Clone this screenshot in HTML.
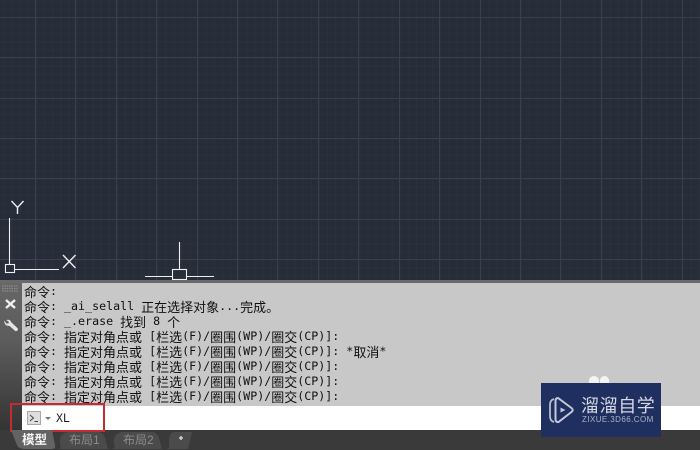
<!DOCTYPE html>
<html lang="zh">
<head>
<meta charset="utf-8">
<style>
html,body{margin:0;padding:0;width:700px;height:450px;overflow:hidden;background:#252c38}
#p{position:relative;width:700px;height:450px;overflow:hidden;background:#262d39}
.a{position:absolute}
#cmd{left:24px;top:284px;width:676px;height:122px;overflow:hidden;font:11.65px/15px "DejaVu Sans Mono","Liberation Mono",monospace;color:#111;white-space:pre}
#cmd div{height:15px}
#cmd i{font:normal 13px/15px "Noto Sans CJK SC","WenQuanYi Zen Hei",sans-serif;display:inline-block;vertical-align:top}
.tab{font:12px/16px "Liberation Sans","Noto Sans CJK SC",sans-serif;color:#8b8b8b;top:432px}
</style>
</head>
<body>
<div id="p">
<svg class="a" style="left:0;top:0" width="700" height="282">
<defs>
<pattern id="m" x="3.8" y="1" width="8.08" height="8.08" patternUnits="userSpaceOnUse">
<path d="M.5 0V8.08M0 .5H8.08" stroke="#2a313d" stroke-width="1" fill="none"/>
</pattern>
</defs>
<rect width="700" height="282" fill="url(#m)"/>
<g stroke="#39404c" stroke-width="1">
<path d="M35.5 0V282M75.5 0V282M116.5 0V282M156.5 0V282M197.5 0V282M237.5 0V282M277.5 0V282M318.5 0V282M358.5 0V282M399.5 0V282M439.5 0V282M480.5 0V282M520.5 0V282M560.5 0V282M601.5 0V282M641.5 0V282M682.5 0V282"/>
<path d="M0 17.5H700M0 57.5H700M0 98.5H700M0 138.5H700M0 178.5H700M0 219.5H700M0 259.5H700"/>
</g>
<g stroke="#eeeeee" stroke-width="1.1" fill="none">
<path d="M9.500 218V264M15 269.500H59"/>
<rect x="5.500" y="264.500" width="9" height="8"/>
<path d="M11.500 201L17.500 207.500L23.500 201M17.500 207.500V214" stroke-width="1.4"/>
<path d="M63 255L75.500 268M75.500 255L63 268" stroke-width="1.4"/>
<path d="M179.500 242V269M145 276.500H172M187 276.500H214"/>
<rect x="172.500" y="269.500" width="14" height="10"/>
</g>
</svg>

<div class="a" style="left:0;top:280px;width:700px;height:3px;background:#6a6a6a"></div>
<div class="a" style="left:0;top:283px;width:22px;height:147px;background:linear-gradient(#666,#5c5c5c 40%,#343434)"></div>
<div class="a" style="left:22px;top:283px;width:678px;height:123px;background:#c8c8c8"></div>
<div class="a" style="left:22px;top:406px;width:678px;height:24px;background:#fff"></div>
<div class="a" style="left:0;top:430px;width:700px;height:20px;background:#3a3a3a"></div>

<svg class="a" style="left:0;top:284px" width="22" height="60">
<path d="M2 2H18M2 4.500H18M2 7H18" stroke="#8f8f8f" stroke-width="1.2" stroke-dasharray="1.4 1"/>
<path d="M6 16L15 24M15 16L6 24" stroke="#efefef" stroke-width="2.4"/>
<path d="M4.500 37.500L6.500 40L9 39.500L9 37.500L7 36.200Q10 35.500 11 38.500L17.500 44.500Q18 47 15.500 46.800L9.500 41.500Q5 42 4.500 37.500Z" fill="#e6e6e6" stroke="#e6e6e6" stroke-width=".6"/>
</svg>

<div class="a" id="cmd"><div><i>命令</i>:</div><div><i>命令</i>: _ai_selall <i>正在选择对象</i>...<i>完成。</i></div><div><i>命令</i>: _.erase <i>找到</i> 8 <i>个</i></div><div><i>命令</i>: <i>指定对角点或</i> [<i>栏选</i>(F)/<i>圈围</i>(WP)/<i>圈交</i>(CP)]:</div><div><i>命令</i>: <i>指定对角点或</i> [<i>栏选</i>(F)/<i>圈围</i>(WP)/<i>圈交</i>(CP)]: *<i>取消</i>*</div><div><i>命令</i>: <i>指定对角点或</i> [<i>栏选</i>(F)/<i>圈围</i>(WP)/<i>圈交</i>(CP)]:</div><div><i>命令</i>: <i>指定对角点或</i> [<i>栏选</i>(F)/<i>圈围</i>(WP)/<i>圈交</i>(CP)]:</div><div><i>命令</i>: <i>指定对角点或</i> [<i>栏选</i>(F)/<i>圈围</i>(WP)/<i>圈交</i>(CP)]:</div></div>

<svg class="a" style="left:26px;top:410px" width="30" height="17">
<rect x="1.500" y="1.500" width="13" height="13" fill="#dedede" stroke="#a9a9a9"/>
<path d="M4 5L7.500 8L4 11M8.500 11.500H12" stroke="#444" fill="none"/>
<path d="M19 7H25L22 10Z" fill="#777"/>
</svg>
<div class="a" style="left:56px;top:411px;font:11.500px/15px 'DejaVu Sans Mono',monospace;color:#222">XL</div>

<div class="a" style="left:10px;top:403px;width:91px;height:25px;border:2px solid #c42c30"></div>

<svg class="a" style="left:0;top:430px" width="200" height="20">
<path d="M11 0L17 15Q19 19 25 19H52Q56 19 55 15L52 0Z" fill="#636363"/>
<path d="M58 19Q62 19 60 14Q59 3 68 2H98Q103 2 105 8L108 19Z" fill="#4b4b4b"/>
<path d="M112 19Q116 19 114 14Q113 3 122 2H152Q157 2 159 8L162 19Z" fill="#4b4b4b"/>
<path d="M166 19Q170 19 169 12Q169 2 175 2H192L188 19Z" fill="#4b4b4b"/>
<path d="M181 6V10M179 8H183" stroke="#ccc" stroke-width="1.600"/>
</svg>
<div class="a tab" style="left:22px;color:#f4f4f4;font-size:12.500px;font-weight:bold">模型</div>
<div class="a tab" style="left:69px">布局1</div>
<div class="a tab" style="left:123px">布局2</div>

<div class="a" style="left:589px;top:376px;width:10px;height:12px;border-radius:5px;background:#f4f4f4"></div>
<div class="a" style="left:600px;top:376px;width:9px;height:12px;border-radius:5px;background:#f4f4f4"></div>
<div class="a" style="left:541px;top:383px;width:120px;height:54px;background:#1f2f5f"></div>
<svg class="a" style="left:541px;top:383px" width="120" height="54">
<path d="M13 16Q9 17 9 22V33Q9 38 13 39" stroke="#b9bfcf" stroke-width="1.800" fill="none"/>
<path d="M17 15Q14.500 15 14.500 18V36Q14.500 39.500 17.500 39L30.500 29Q33 27 30.500 25Z" stroke="#c2c8d6" stroke-width="2" fill="none"/>
<path d="M19.500 24.500L24.500 27L19.500 29.500Z" fill="#c2c8d6"/>
</svg>
<div class="a" style="left:581px;top:394px;font:400 18px/22px 'Noto Sans CJK SC','WenQuanYi Zen Hei',sans-serif;letter-spacing:.6px;color:#d5d9e3;white-space:nowrap">溜溜自学</div>
<div class="a" style="left:582px;top:414px;font:8px/11px 'Liberation Sans',sans-serif;letter-spacing:.42px;color:#aab2c6;white-space:nowrap">ZIXUE.3D66.COM</div>
</div>
</body>
</html>
